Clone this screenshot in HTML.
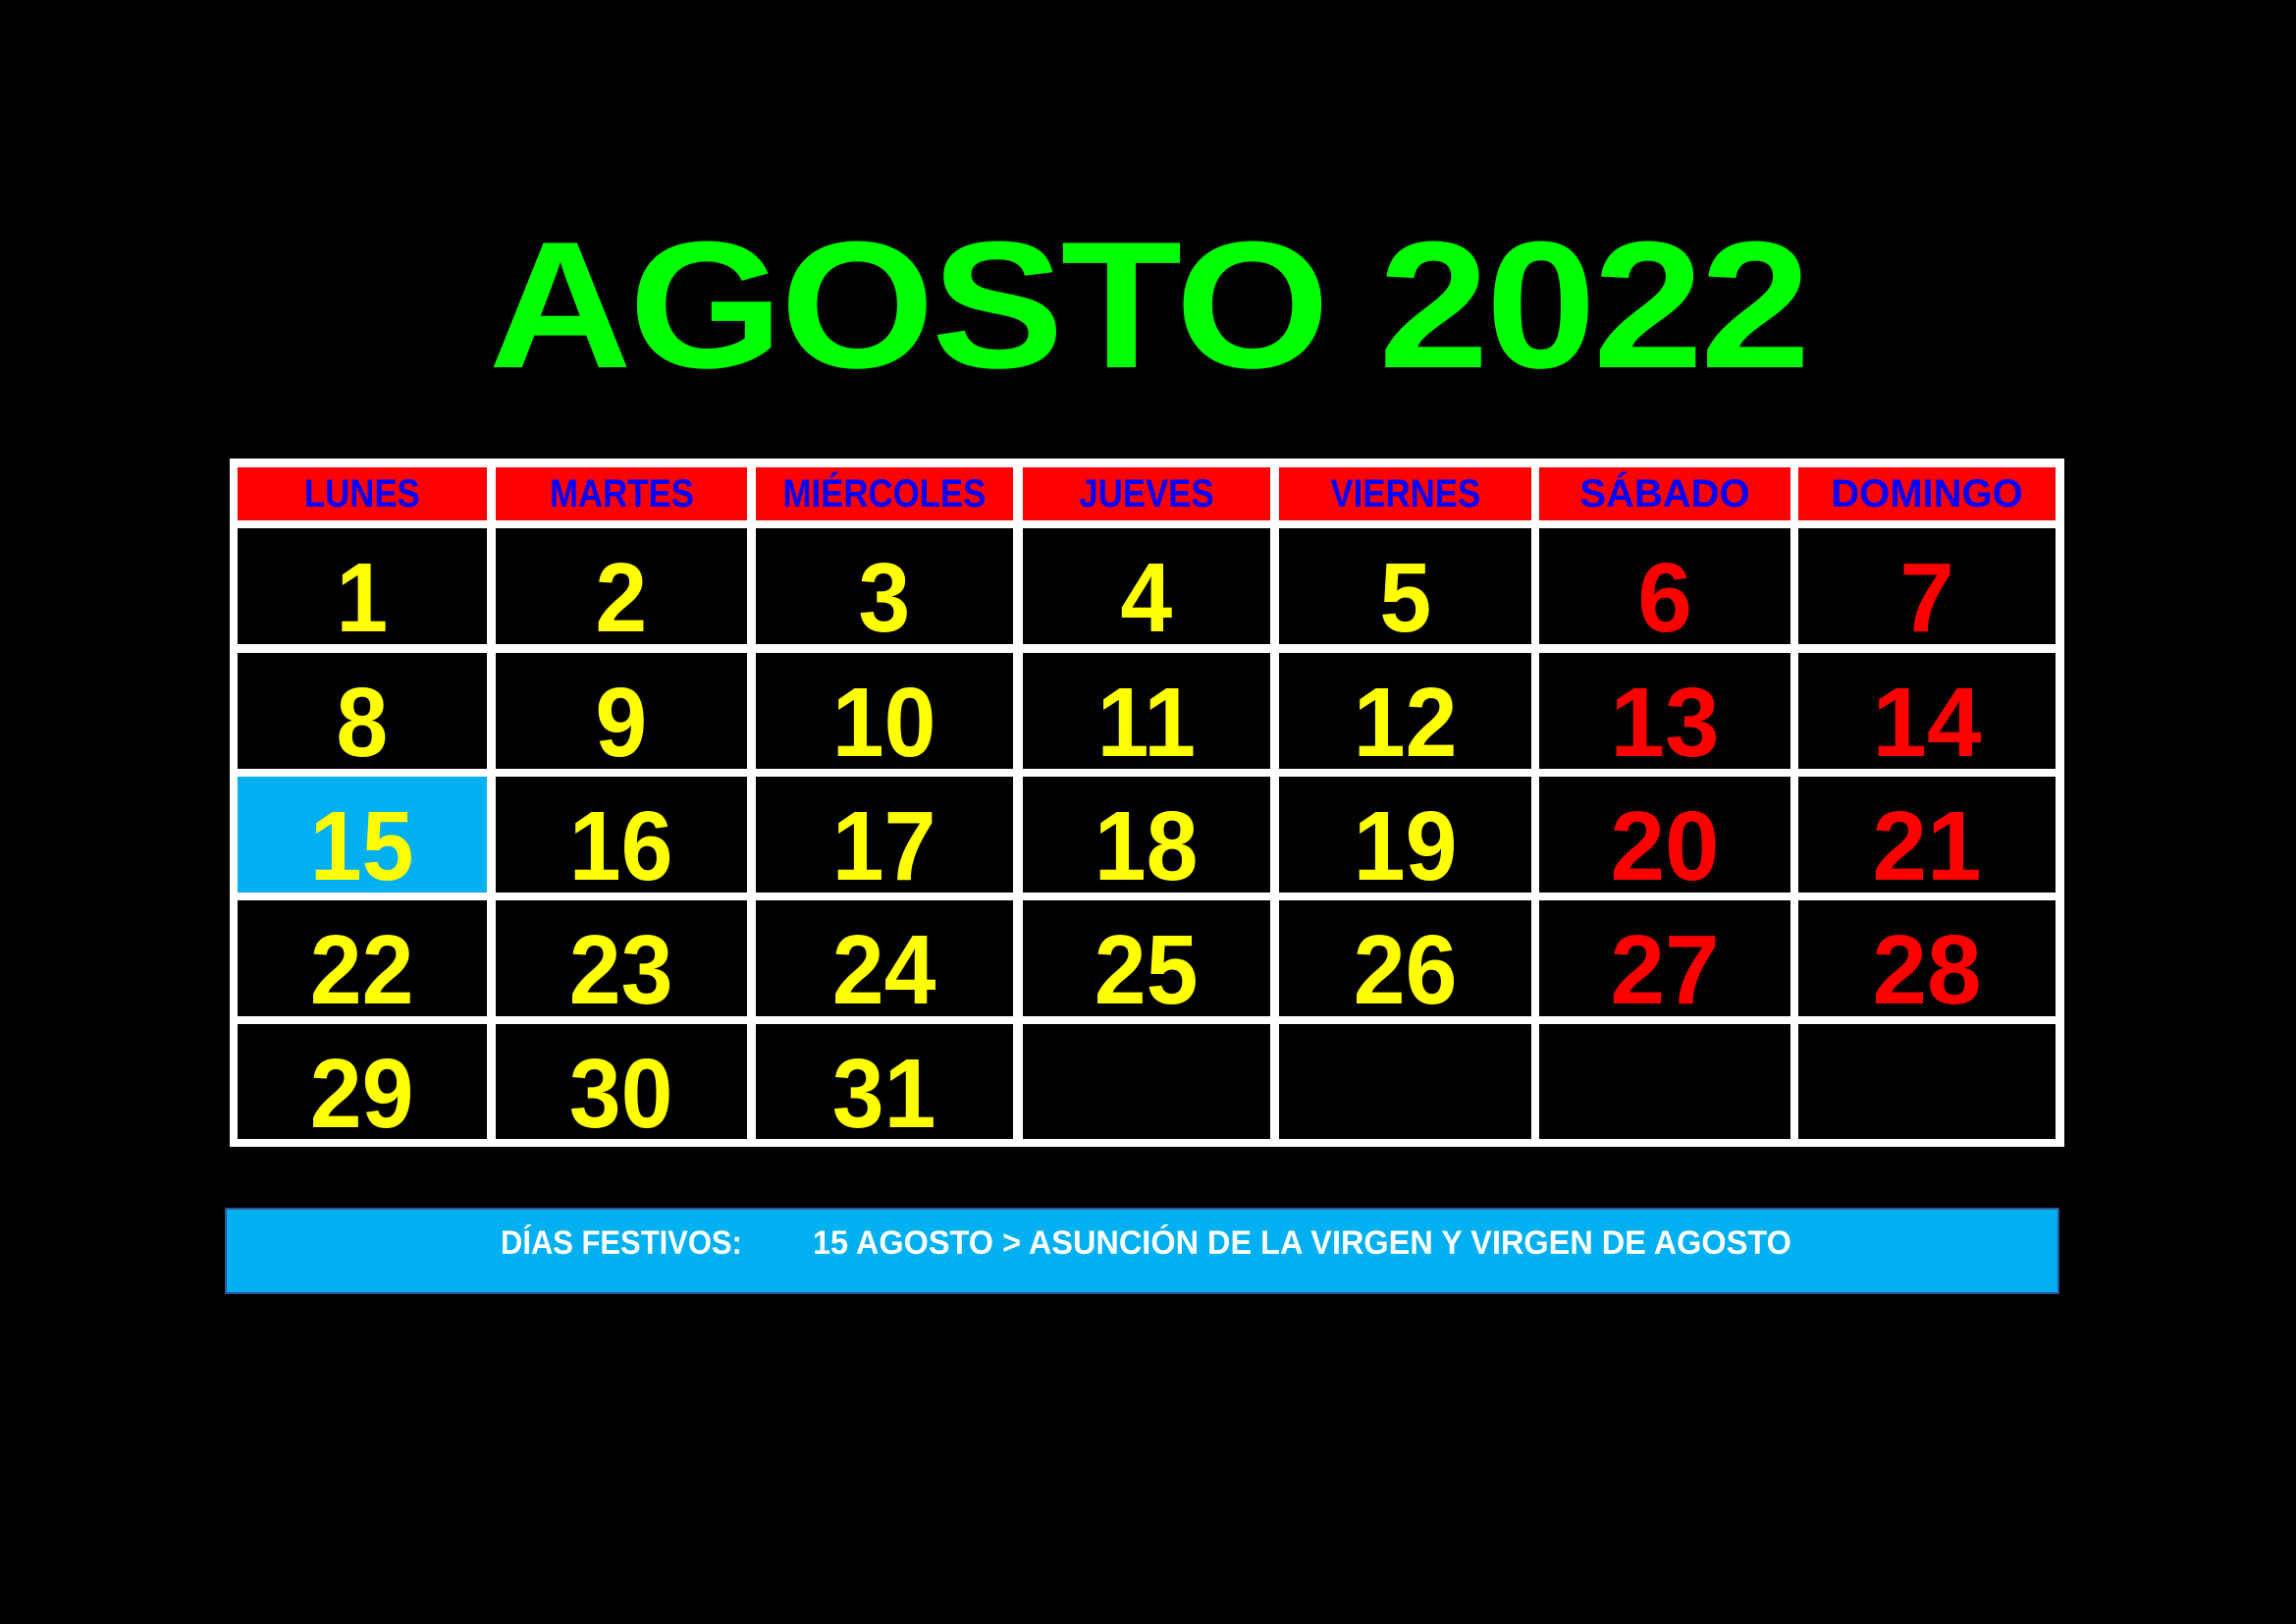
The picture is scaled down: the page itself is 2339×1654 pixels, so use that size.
<!DOCTYPE html>
<html><head><meta charset="utf-8"><style>
*{margin:0;padding:0;box-sizing:border-box}
body{width:2339px;height:1654px;background:#000;position:relative;overflow:hidden;font-family:"Liberation Sans",sans-serif}
.title{position:absolute;left:0;width:2339px;top:218px;text-align:center;font-weight:bold;font-size:184px;line-height:184px;color:#00ff00;transform:scaleX(1.1);transform-origin:1169px 0;letter-spacing:-3px}
.tbl{position:absolute;left:234px;top:467px;width:1869px;height:701px;background:#fff}
.c{position:absolute;background:#000;text-align:center;font-weight:bold}
.h{background:#ff0000;color:#0000ff;font-size:40px;line-height:54px;top:476px;height:54px}
.h span{display:inline-block;transform:scaleX(.87)}
.d{color:#ffff00;font-size:100px;line-height:118px;padding-top:12px;height:118px}
.d span{display:inline-block;transform:scaleX(.95)}
.w{color:#ff0000}
.w span{transform:none}
.k1{left:242px;width:254px}.k2{left:505px;width:256px}.k3{left:770px;width:262px}.k4{left:1042px;width:252px}.k5{left:1303px;width:257px}.k6{left:1568px;width:256px}.k7{left:1832px;width:262px}
.r1{top:538px}.r2{top:665px}.r3{top:791px}.r4{top:917px}.r5{top:1043px;height:117px}
.hl{background:#00b0f0}
.ban{position:absolute;left:229px;top:1230px;width:1869px;height:88px;background:#00b0f0;border:2px solid #2f5597;color:#fff;font-weight:bold;font-size:34px}
.ban span{position:absolute;top:15px;white-space:nowrap;transform-origin:left;transform:scaleX(.91)}
</style></head><body>
<div class="title">AGOSTO 2022</div>
<div class="tbl"></div>
<div class="c h k1"><span>LUNES</span></div>
<div class="c h k2"><span>MARTES</span></div>
<div class="c h k3"><span>MIÉRCOLES</span></div>
<div class="c h k4"><span>JUEVES</span></div>
<div class="c h k5"><span>VIERNES</span></div>
<div class="c h k6">SÁBADO</div>
<div class="c h k7">DOMINGO</div>

<div class="c d r1 k1"><span>1</span></div><div class="c d r1 k2"><span>2</span></div><div class="c d r1 k3"><span>3</span></div><div class="c d r1 k4"><span>4</span></div><div class="c d r1 k5"><span>5</span></div><div class="c d w r1 k6"><span>6</span></div><div class="c d w r1 k7"><span>7</span></div>
<div class="c d r2 k1"><span>8</span></div><div class="c d r2 k2"><span>9</span></div><div class="c d r2 k3"><span>10</span></div><div class="c d r2 k4"><span>11</span></div><div class="c d r2 k5"><span>12</span></div><div class="c d w r2 k6"><span>13</span></div><div class="c d w r2 k7"><span>14</span></div>
<div class="c d r3 k1 hl"><span>15</span></div><div class="c d r3 k2"><span>16</span></div><div class="c d r3 k3"><span>17</span></div><div class="c d r3 k4"><span>18</span></div><div class="c d r3 k5"><span>19</span></div><div class="c d w r3 k6"><span>20</span></div><div class="c d w r3 k7"><span>21</span></div>
<div class="c d r4 k1"><span>22</span></div><div class="c d r4 k2"><span>23</span></div><div class="c d r4 k3"><span>24</span></div><div class="c d r4 k4"><span>25</span></div><div class="c d r4 k5"><span>26</span></div><div class="c d w r4 k6"><span>27</span></div><div class="c d w r4 k7"><span>28</span></div>
<div class="c d r5 k1"><span>29</span></div><div class="c d r5 k2"><span>30</span></div><div class="c d r5 k3"><span>31</span></div><div class="c d r5 k4"></div><div class="c d r5 k5"></div><div class="c d r5 k6"></div><div class="c d r5 k7"></div>

<div class="ban"><span style="left:279px">DÍAS FESTIVOS:</span><span style="left:597px;transform:scaleX(.955)">15 AGOSTO &gt; ASUNCIÓN DE LA VIRGEN Y VIRGEN DE AGOSTO</span></div>
</body></html>
